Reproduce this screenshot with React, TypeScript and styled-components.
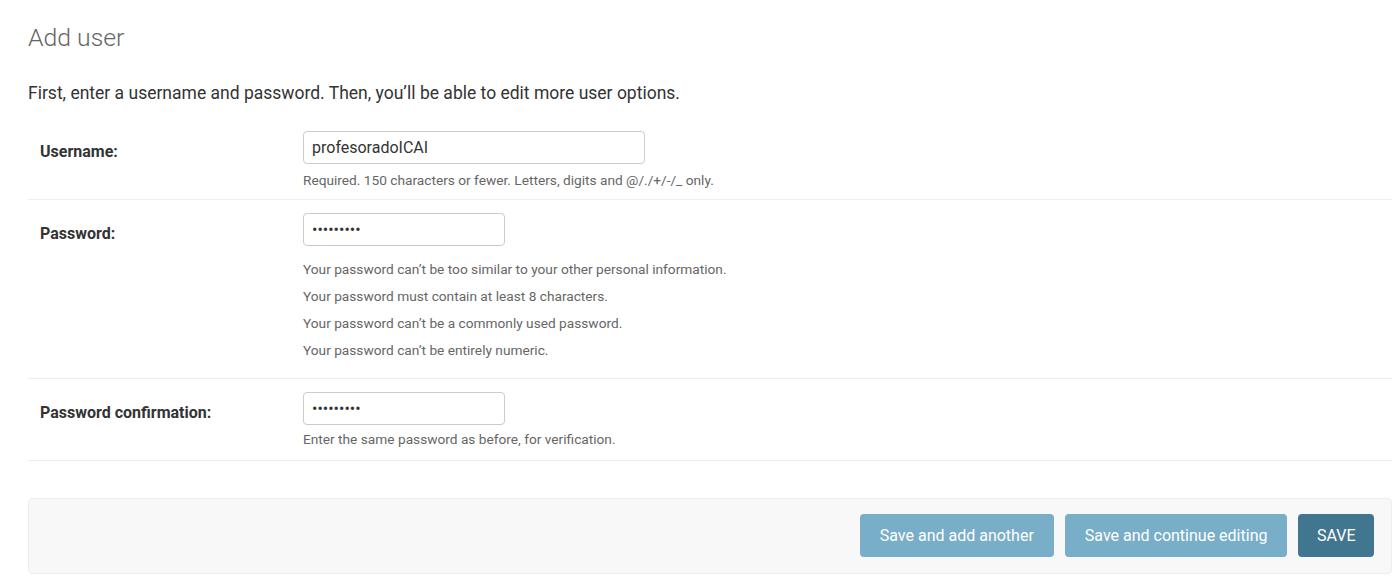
import React from "react";
import styled, { createGlobalStyle } from "styled-components";

const Global = createGlobalStyle`
  html, body { margin: 0; padding: 0; background: #fff; }
  body { font-family: Roboto, "Liberation Sans", sans-serif; color: #333; }
  * { box-sizing: border-box; }
`;

const Page = styled.div`
  padding: 0 4px 0 28px;
`;

const Title = styled.h1`
  margin: 24px 0 0;
  font-size: 24.8px;
  line-height: 28px;
  font-weight: 300;
  color: #666;
`;

const Intro = styled.p`
  margin: 31px 0 0;
  font-size: 17.5px;
  line-height: 20px;
  color: #333;
`;

const Fieldset = styled.div`
  margin-top: 15px;
`;

const Row = styled.div<{ $bottom?: number }>`
  display: grid;
  grid-template-columns: 263px 1fr;
  padding: 13px 12px ${(p) => p.$bottom ?? 11}px;
  border-bottom: 1px solid #eee;
`;

const Label = styled.label`
  font-size: 16px;
  font-weight: 700;
  color: #333;
  line-height: 19px;
  padding-top: 11px;
`;

const Field = styled.div`
  display: flex;
  flex-direction: column;
  align-items: flex-start;
`;

const Input = styled.input<{ $w: number }>`
  width: ${(p) => p.$w}px;
  height: 33px;
  border: 1px solid #ccc;
  border-radius: 4px;
  padding: 0 8px;
  font-family: Roboto, "Liberation Sans", sans-serif;
  font-size: 16px;
  color: #333;
  background: #fff;
  outline: none;
`;

const Help = styled.div<{ $top?: number }>`
  margin-top: ${(p) => p.$top ?? 8}px;
  font-size: 13.7px;
  line-height: 16px;
  color: #666;
`;

const HelpList = styled.ul`
  list-style: none;
  margin: 9px 0 5px;
  padding: 0;
  font-size: 13.7px;
  color: #666;
`;

const HelpItem = styled.li`
  line-height: 16px;
  padding: 5.5px 0;
`;

const SubmitRow = styled.div`
  margin-top: 37px;
  display: flex;
  justify-content: flex-end;
  gap: 11px;
  padding: 15px 17px 16px;
  background: #f8f8f8;
  border: 1px solid #eee;
  border-radius: 4px;
`;

const Button = styled.button<{ $primary?: boolean }>`
  height: 43px;
  padding: 0 ${(p) => (p.$primary ? 18.5 : 20)}px;
  border: none;
  border-radius: 4px;
  background: ${(p) => (p.$primary ? "#417690" : "#79aec8")};
  color: #fff;
  font-family: Roboto, "Liberation Sans", sans-serif;
  font-size: 16px;
  cursor: pointer;
`;

export default function App() {
  return (
    <Page>
      <Global />
      <Title>Add user</Title>
      <Intro>First, enter a username and password. Then, you’ll be able to edit more user options.</Intro>
      <Fieldset>
        <Row>
          <Label>Username:</Label>
          <Field>
            <Input $w={342} type="text" defaultValue="profesoradoICAI" />
            <Help>Required. 150 characters or fewer. Letters, digits and @/./+/-/_ only.</Help>
          </Field>
        </Row>
        <Row $bottom={10}>
          <Label>Password:</Label>
          <Field>
            <Input $w={202} type="password" defaultValue="123456789" />
            <HelpList>
              <HelpItem>Your password can’t be too similar to your other personal information.</HelpItem>
              <HelpItem>Your password must contain at least 8 characters.</HelpItem>
              <HelpItem>Your password can’t be a commonly used password.</HelpItem>
              <HelpItem>Your password can’t be entirely numeric.</HelpItem>
            </HelpList>
          </Field>
        </Row>
        <Row $bottom={13}>
          <Label>Password confirmation:</Label>
          <Field>
            <Input $w={202} type="password" defaultValue="123456789" />
            <Help $top={6}>Enter the same password as before, for verification.</Help>
          </Field>
        </Row>
      </Fieldset>
      <SubmitRow>
        <Button>Save and add another</Button>
        <Button>Save and continue editing</Button>
        <Button $primary>SAVE</Button>
      </SubmitRow>
    </Page>
  );
}
